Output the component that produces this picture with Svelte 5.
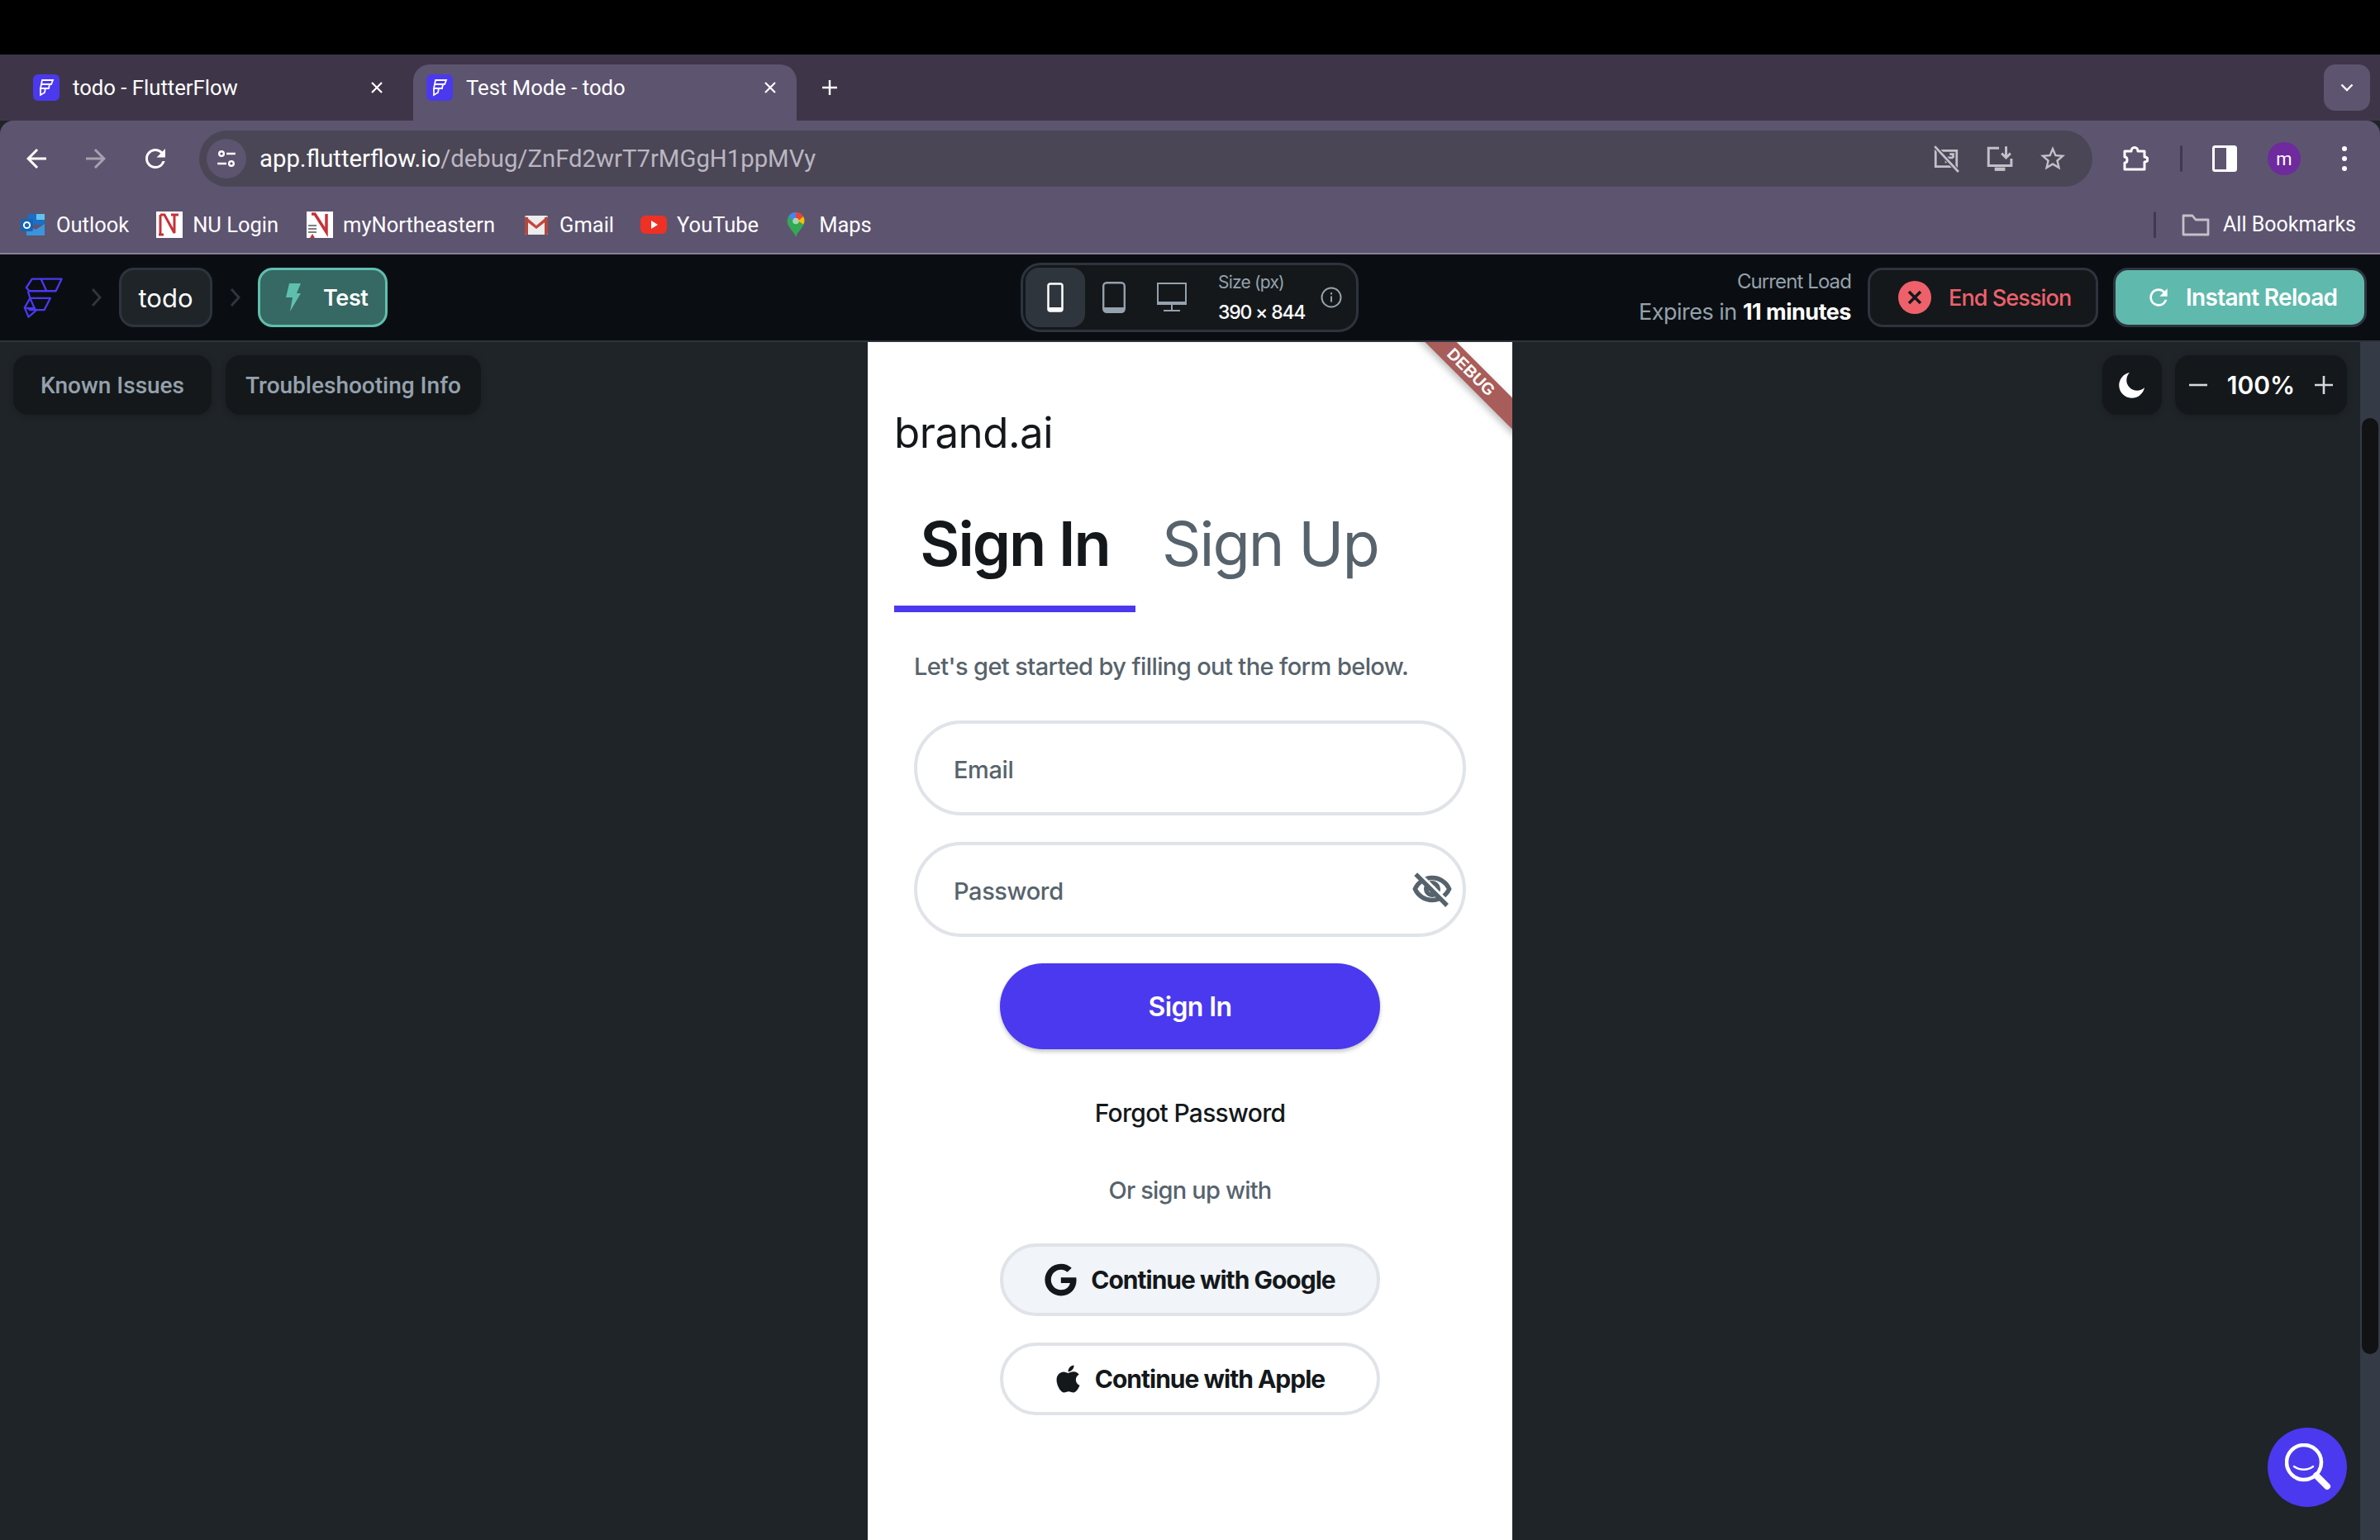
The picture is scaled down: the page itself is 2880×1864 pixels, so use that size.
<script>
  const bookmarks = [
    { name: 'Outlook', icon: 'outlook', gap: 33 },
    { name: 'NU Login', icon: 'nu', gap: 34 },
    { name: 'myNortheastern', icon: 'nu2', gap: 34 },
    { name: 'Gmail', icon: 'gmail', gap: 32 },
    { name: 'YouTube', icon: 'yt', gap: 33 },
    { name: 'Maps', icon: 'maps', gap: 0 }
  ];
  const tabs = [
    { title: 'todo - FlutterFlow', active: false },
    { title: 'Test Mode - todo', active: true }
  ];
</script>

{#snippet fav()}
  <span class="favicon">
    <svg viewBox="0 0 32 32" width="32" height="32">
      <rect width="32" height="32" rx="6" fill="#4b39ef" />
      <path d="M11 7h13l-2 5H10zM10 12h10l-1 5H9zM9 17h6l-1 5-5 3z" fill="none" stroke="#fff" stroke-width="1.800" />
    </svg>
  </span>
{/snippet}

<div class="page">
  <div class="blackbar"></div>

  <div class="tabstrip">
    {#each tabs as tab}
      <div class="tab" class:active={tab.active}>
        {@render fav()}
        <span class="tab-title">{tab.title}</span>
        <svg class="tab-x" viewBox="0 0 16 16" width="16" height="16"><path d="M2 2l12 12M14 2L2 14" stroke="#fff" stroke-width="2.200" /></svg>
      </div>
    {/each}
    <svg class="newtab" viewBox="0 0 20 20" width="20" height="20"><path d="M10 1v18M1 10h18" stroke="#fff" stroke-width="2.400" /></svg>
    <div class="tab-menu">
      <svg viewBox="0 0 16 10" width="16" height="10"><path d="M1.500 1.500L8 8l6.500-6.500" fill="none" stroke="#fff" stroke-width="2.400" /></svg>
    </div>
  </div>

  <div class="chrome">
    <div class="toolbar">
      <div class="navs">
        <svg viewBox="0 0 24 24" width="36" height="36"><path fill="#fff" d="M20 11H7.830l5.590-5.590L12 4l-8 8 8 8 1.410-1.410L7.830 13H20v-2z" /></svg>
        <svg class="dim" viewBox="0 0 24 24" width="36" height="36"><path fill="#fff" d="M4 11h12.170l-5.590-5.590L12 4l8 8-8 8-1.410-1.410L16.170 13H4v-2z" /></svg>
        <svg viewBox="0 0 24 24" width="36" height="36"><path fill="#fff" d="M17.650 6.350A7.958 7.958 0 0 0 12 4c-4.420 0-7.990 3.580-7.990 8s3.570 8 7.990 8c3.730 0 6.840-2.550 7.730-6h-2.080A5.990 5.990 0 0 1 12 18c-3.310 0-6-2.690-6-6s2.690-6 6-6c1.660 0 3.140.690 4.220 1.780L13 11h7V4l-2.350 2.350z" /></svg>
      </div>
      <div class="omnibox">
        <span class="site">
          <svg viewBox="0 0 24 24" width="26" height="26" fill="none" stroke="#fff" stroke-width="2.200">
            <circle cx="6.500" cy="6.500" r="2.600" /><path d="M12 6.500h10M2 17.500h10" /><circle cx="17.500" cy="17.500" r="2.600" />
          </svg>
        </span>
        <span class="url"><b>app.flutterflow.io</b>/debug/ZnFd2wrT7rMGgH1ppMVy</span>
        <div class="omni-icons">
          <svg viewBox="0 0 32 32" width="34" height="34" fill="none" stroke="#c4c0c9" stroke-width="2.600">
            <path d="M4 7h24v18H4z" /><path d="M16 21v-6h8M20 11h4v4" /><path d="M3 2l27 29" stroke="#4a4655" stroke-width="5" /><path d="M3 2l27 29" />
          </svg>
          <svg viewBox="0 0 32 32" width="34" height="34" fill="none" stroke="#c4c0c9" stroke-width="2.800">
            <path d="M16 4H4v20h26v-8" /><path d="M24 2v12M19 10l5 5 5-5" /><path d="M11 28h12" stroke-width="4" />
          </svg>
          <svg viewBox="0 0 24 24" width="36" height="36"><path fill="#c4c0c9" d="M22 9.240l-7.190-.620L12 2 9.190 8.630 2 9.240l5.460 4.730L5.820 21 12 17.270 18.180 21l-1.630-7.030L22 9.240zM12 15.400l-3.760 2.270 1-4.280-3.320-2.880 4.380-.380L12 6.100l1.710 4.040 4.380.380-3.320 2.880 1 4.280L12 15.400z" /></svg>
        </div>
      </div>
      <div class="actions">
        <svg viewBox="0 0 32 32" width="32" height="36" fill="none" stroke="#fff" stroke-width="3">
          <path d="M3 7h8c0-6 8-6 8 0h8v7c5 0 5 6 0 6v9H3v-8c4 0 4-7 0-7z" stroke-linejoin="round" />
        </svg>
        <span class="vsep"></span>
        <svg viewBox="0 0 30 32" width="30" height="32"><rect x="1.500" y="1.500" width="27" height="29" rx="2" fill="none" stroke="#fff" stroke-width="3" /><rect x="17" y="1.500" width="12" height="29" fill="#fff" /></svg>
        <span class="avatar">m</span>
        <span class="dots"><i></i><i></i><i></i></span>
      </div>
    </div>

    <div class="bookmarks">
      {#each bookmarks as b}
        <div class="bm" style="margin-right: {b.gap}px">
          {#if b.icon === 'outlook'}
            <svg viewBox="0 0 32 32" width="32" height="32">
              <rect x="10" y="3" width="20" height="13" fill="#1d6fc4" /><rect x="20" y="3" width="10" height="7" fill="#63c3f0" />
              <path d="M8 15l11 7 11-7v14H8z" fill="#3a95dc" /><rect x="1" y="9" width="15" height="15" rx="2" fill="#1565b8" />
              <circle cx="8.500" cy="16.500" r="3.600" fill="none" stroke="#fff" stroke-width="2" />
            </svg>
          {:else if b.icon === 'nu'}
            <svg viewBox="0 0 32 32" width="32" height="32">
              <rect width="32" height="32" fill="#fff" /><path d="M5 4h5l12 22V4M5 4v24M27 4h-9M3 28h6" fill="none" stroke="#c8313a" stroke-width="3" />
            </svg>
          {:else if b.icon === 'nu2'}
            <svg viewBox="0 0 32 32" width="32" height="32">
              <rect width="32" height="32" fill="#fff" /><path d="M6 3h4l14 22V3" fill="none" stroke="#c8313a" stroke-width="3.500" /><path d="M2 17h10M2 21h10M2 25h10" stroke="#555" stroke-width="1.500" /><path d="M4 32l3-5 3 5z" fill="#c8313a" />
            </svg>
          {:else if b.icon === 'gmail'}
            <svg viewBox="0 0 32 32" width="32" height="32">
              <rect x="2" y="5" width="28" height="23" rx="2" fill="#ececec" /><path d="M3 6l13 11L29 6v5L16 21 3 11z" fill="#c4463c" /><path d="M2 7h4v21H4a2 2 0 0 1-2-2zM30 7h-4v21h2a2 2 0 0 0 2-2z" fill="#b0493f" />
            </svg>
          {:else if b.icon === 'yt'}
            <svg viewBox="0 0 32 32" width="32" height="32">
              <rect y="5" width="32" height="22" rx="6" fill="#ee3124" /><path d="M13 11l8 5-8 5z" fill="#fff" />
            </svg>
          {:else}
            <svg class="maps" viewBox="0 0 24 32" width="24" height="32">
              <path d="M12 1a10.500 10.500 0 0 1 10.500 10.500C22.500 19 14 24 12 31 10 24 1.500 19 1.500 11.500A10.500 10.500 0 0 1 12 1z" fill="#34a853" />
              <path d="M4 4.500A10.500 10.500 0 0 1 12 1v7a4 4 0 0 0-4 3.500z" fill="#4285f4" /><path d="M12 1a10.500 10.500 0 0 1 9 5l-6 5a4 4 0 0 0-3-3z" fill="#ea4335" />
              <path d="M21 6c2 3 1.800 7 0 9.500l-6-4z" fill="#fbbc04" /><circle cx="12" cy="11.500" r="3.800" fill="#fff" opacity=".55" />
            </svg>
          {/if}
          <span>{b.name}</span>
        </div>
      {/each}
      <span class="vsep bm-sep"></span>
      <svg viewBox="0 0 34 28" width="34" height="28" fill="none" stroke="#c4c0c9" stroke-width="2.800"><path d="M2 25V3h11l4 5h15v18H2z" stroke-linejoin="round" /></svg>
      <span class="allbm">All Bookmarks</span>
    </div>
  </div>

  <header class="appbar">
    <div class="crumbs">
      <svg class="ff-logo" viewBox="50 258 150 148" width="50" height="49" fill="none" stroke="#4b39ef" stroke-width="7" stroke-linejoin="round">
        <path d="M85 263h108l-21 44H76l-12-12z" /><path d="M118 263l20 44" />
        <path d="M70 307l8 26h74l-22 43H76l-8-9" /><path d="M78 333l-20 35 14 34 26-22-20-47" /><path d="M58 370h40" />
      </svg>
      <svg class="chev first" viewBox="0 0 13 24" width="13" height="24"><path d="M2 2l9 10-9 10" fill="none" stroke="#30363e" stroke-width="3" /></svg>
      <div class="pill">todo</div>
      <svg class="chev" viewBox="0 0 13 24" width="13" height="24"><path d="M2 2l9 10-9 10" fill="none" stroke="#30363e" stroke-width="3" /></svg>
      <div class="pill test">
        <svg viewBox="0 0 18 34" width="18" height="34"><path d="M4 0h14l-5 12h5L5 34l3-17H0z" fill="#5fbfae" /></svg>
        <span>Test</span>
      </div>
    </div>

    <div class="devices">
      <div class="device on">
        <svg viewBox="0 0 20 36" width="20" height="36"><rect x="1.500" y="1.500" width="17" height="33" rx="2.500" fill="none" stroke="#fff" stroke-width="2.500" /><rect x="1.500" y="30" width="17" height="5" rx="2" fill="#fff" /></svg>
      </div>
      <div class="device">
        <svg viewBox="0 0 28 38" width="28" height="38"><rect x="1.200" y="1.200" width="25.600" height="35.600" rx="4" fill="none" stroke="#95a1ac" stroke-width="2.400" /><path d="M1 31h26v3a3 3 0 0 1-3 3H4a3 3 0 0 1-3-3z" fill="#95a1ac" /></svg>
      </div>
      <div class="device">
        <svg viewBox="0 0 36 36" width="36" height="36" fill="none"><rect x="1" y="1" width="34" height="25" stroke="#95a1ac" stroke-width="2" /><rect x="0" y="23" width="36" height="4" fill="#95a1ac" /><path d="M18 27v6M8 34h20" stroke="#95a1ac" stroke-width="2" /></svg>
      </div>
      <div class="size">
        <span class="size-l">Size (px)</span>
        <span class="size-v">390 × 844</span>
      </div>
      <svg class="info" viewBox="0 0 26 26" width="26" height="26" fill="none" stroke="#95a1ac" stroke-width="2"><circle cx="13" cy="13" r="11.500" /><path d="M13 11.500v7M13 7v2.400" /></svg>
    </div>

    <div class="session">
      <div class="load">
        <span class="load-l">Current Load</span>
        <span class="load-v">Expires in <b>11 minutes</b></span>
      </div>
      <div class="btn end">
        <svg viewBox="0 0 40 40" width="40" height="40"><circle cx="20" cy="20" r="20" fill="#ee616b" /><path d="M13 13l14 14M27 13L13 27" stroke="#14181b" stroke-width="3.500" /></svg>
        <span>End Session</span>
      </div>
      <div class="btn reload">
        <svg viewBox="0 0 24 24" width="32" height="32"><path fill="#fff" d="M17.650 6.350A7.958 7.958 0 0 0 12 4c-4.420 0-7.990 3.580-7.990 8s3.570 8 7.990 8c3.730 0 6.840-2.550 7.730-6h-2.080A5.990 5.990 0 0 1 12 18c-3.310 0-6-2.690-6-6s2.690-6 6-6c1.660 0 3.140.690 4.220 1.780L13 11h7V4l-2.350 2.350z" /></svg>
        <span>Instant Reload</span>
      </div>
    </div>
  </header>

  <main class="stage">
    <div class="side-left">
      <div class="chip known">Known Issues</div>
      <div class="chip">Troubleshooting Info</div>
    </div>

    <section class="phone">
      <div class="ribbon"><span>DEBUG</span></div>
      <div class="brand">brand.ai</div>
      <div class="tabs">
        <div class="t t-on">Sign In</div>
        <div class="t">Sign Up</div>
      </div>
      <p class="lead">Let's get started by filling out the form below.</p>
      <form class="form">
        <div class="field"><input placeholder="Email" /></div>
        <div class="field">
          <input placeholder="Password" />
          <svg viewBox="0 0 24 24" width="50" height="50"><path fill="#57636c" stroke="#57636c" stroke-width=".6" d="M12 6c3.790 0 7.170 2.130 8.820 5.500-.590 1.220-1.420 2.270-2.410 3.120l1.410 1.410c1.390-1.230 2.490-2.770 3.180-4.530C21.270 7.110 17 4 12 4c-1.270 0-2.490.2-3.640.57l1.650 1.650C10.660 6.090 11.320 6 12 6zm-1.070 1.140L13 9.210c.570.25 1.030.71 1.280 1.280l2.070 2.070c.08-.34.14-.7.14-1.070C16.500 9.010 14.480 7 12 7c-.37 0-.72.05-1.070.14zM2.010 3.870l2.680 2.680C3.060 7.830 1.770 9.530 1 11.500 2.730 15.890 7 19 12 19c1.520 0 2.980-.29 4.320-.82l3.420 3.420 1.410-1.410L3.420 2.450 2.010 3.870zm7.500 7.500l2.610 2.610c-.04.01-.08.02-.12.02-1.380 0-2.500-1.120-2.500-2.500 0-.05.01-.08.01-.13zm-3.400-3.400l1.750 1.750c-.23.55-.36 1.150-.36 1.780 0 2.480 2.020 4.500 4.500 4.500.63 0 1.230-.13 1.770-.36l.98.98c-.88.24-1.800.38-2.750.38-3.790 0-7.170-2.130-8.820-5.500.7-1.430 1.720-2.610 2.930-3.530z" /></svg>
        </div>
        <button type="button" class="primary">Sign In</button>
        <div class="forgot">Forgot Password</div>
        <div class="orwith">Or sign up with</div>
        <button type="button" class="social google">
          <svg viewBox="0 0 488 512" width="39" height="40"><path fill="#14181b" d="M488 261.800C488 403.300 391.100 504 248 504 110.800 504 0 393.200 0 256S110.800 8 248 8c66.800 0 123 24.500 166.300 64.900l-67.500 64.900C258.500 52.600 94.300 116.600 94.300 256c0 86.500 69.100 156.600 153.700 156.600 98.200 0 135-70.400 140.800-106.900H248v-85.300h236.100c2.300 12.700 3.900 24.900 3.900 41.400z" /></svg>
          <span>Continue with Google</span>
        </button>
        <button type="button" class="social">
          <svg viewBox="0 0 384 512" width="31" height="38"><path fill="#14181b" d="M318.700 268.700c-.2-36.700 16.400-64.400 50-84.800-18.800-26.900-47.200-41.700-84.700-44.600-35.500-2.800-74.300 20.700-88.500 20.700-15 0-49.400-19.700-76.400-19.700C63.300 141.200 4 184.800 4 273.500q0 39.300 14.400 81.200c12.800 36.700 59 126.700 107.200 125.200 25.200-.6 43-17.900 75.800-17.900 31.800 0 48.300 17.900 76.400 17.900 48.600-.7 90.400-82.500 102.600-119.300-65.200-30.700-61.700-90-61.700-91.900zm-56.600-164.200c27.300-32.400 24.800-61.900 24-72.500-24.100 1.400-52 16.400-67.900 34.900-17.500 19.800-27.800 44.300-25.600 71.900 26.100 2 49.900-11.400 69.500-34.300z" /></svg>
          <span>Continue with Apple</span>
        </button>
      </form>
    </section>

    <div class="side-right">
      <div class="tools">
        <div class="chip moon">
          <svg viewBox="0 0 32 32" width="32" height="32"><path fill="#fff" d="M13 1A15.500 15.500 0 1 0 31 19 12.500 12.500 0 0 1 13 1z" /></svg>
        </div>
        <div class="chip zoom">
          <svg viewBox="0 0 22 22" width="22" height="22"><path d="M0 11h22" stroke="#d5d8dc" stroke-width="2.600" /></svg>
          <span>100%</span>
          <svg viewBox="0 0 22 22" width="22" height="22"><path d="M0 11h22M11 0v22" stroke="#d5d8dc" stroke-width="2.600" /></svg>
        </div>
      </div>
      <div class="fab">
        <svg viewBox="0 0 56 58" width="56" height="58" fill="none" stroke="#fff">
          <circle cx="23" cy="23" r="21" stroke-width="4.500" />
          <path d="M11 28c7 5 17 5 23 0" stroke-width="2.400" stroke-linecap="round" />
          <path d="M38 39l13 13" stroke-width="8" stroke-linecap="round" />
        </svg>
      </div>
    </div>

    <div class="scroll"><div class="thumb"></div></div>
  </main>
</div>

<style>
  :global(body) { margin: 0; background: #1f2428; }
  .page { width: 2880px; height: 1864px; display: flex; flex-direction: column; overflow: hidden; font-family: Roboto, "Liberation Sans", sans-serif; }
  svg { display: block; flex: none; }

  .blackbar { height: 66px; background: #000; flex: none; }

  .tabstrip { height: 80px; flex: none; background: #3e3648; display: flex; align-items: flex-end; color: #fff; position: relative; }
  .tab { width: 500px; height: 68px; box-sizing: border-box; padding: 0 36px 12px 40px; display: flex; align-items: center; }
  .tab.active { width: 464px; padding: 0 24px 12px 16px; background: #5d5470; border-radius: 20px 20px 0 0; }
  .tab-title { font-size: 25.700px; margin-left: 16px; flex: 1; white-space: nowrap; }
  .newtab { margin: 0 0 30px 30px; }
  .tab-menu { position: absolute; right: 12px; top: 12px; width: 56px; height: 56px; border-radius: 14px; background: #5d5470; display: flex; align-items: center; justify-content: center; }

  .chrome { height: 160px; flex: none; background: #5d5470; border-radius: 16px 16px 0 0; border-bottom: 2px solid #8a7f9a; box-sizing: content-box; color: #fff; }
  .toolbar { height: 92px; display: flex; align-items: center; padding: 0 0 0 26px; box-sizing: border-box; }
  .navs { display: flex; gap: 36px; width: 215px; flex: none; }
  .dim { opacity: .45; }
  .omnibox { width: 2291px; height: 68px; flex: none; background: #4a4655; border-radius: 34px; display: flex; align-items: center; padding: 0 30px 0 9px; box-sizing: border-box; }
  .site { width: 48px; height: 48px; border-radius: 50%; background: #5d5470; display: flex; align-items: center; justify-content: center; flex: none; }
  .url { font-size: 29.300px; margin-left: 16px; color: #bbb6c2; flex: 1; white-space: nowrap; }
  .url b { font-weight: 400; color: #fff; }
  .omni-icons { display: flex; gap: 30px; align-items: center; }
  .actions { display: flex; align-items: center; margin-left: 36px; }
  .vsep { width: 3px; height: 32px; background: #413a4e; border-radius: 2px; flex: none; }
  .actions .vsep { margin: 0 36px 0 38px; }
  .avatar { width: 40px; height: 40px; border-radius: 50%; background: #6f2a9e; font-size: 22px; display: flex; align-items: center; justify-content: center; margin: 0 0 0 37px; }
  .dots { display: flex; flex-direction: column; gap: 6px; margin-left: 50px; }
  .dots i { width: 6px; height: 6px; border-radius: 50%; background: #fff; display: block; }

  .bookmarks { height: 68px; display: flex; align-items: center; padding: 0 29px 1px 24px; box-sizing: border-box; font-size: 25.500px; }
  .bm { display: flex; align-items: center; gap: 12px; white-space: nowrap; }
  .maps { margin-right: 4px; }
  .bm-sep { margin-left: auto; margin-right: 31px; }
  .allbm { margin-left: 16px; white-space: nowrap; font-size: 25px; }

  .appbar { height: 104px; flex: none; box-sizing: content-box; background: #0a0e12; border-bottom: 2px solid #2e343e; display: grid; grid-template-columns: 1235px 409px 1fr; align-items: center; font-family: Inter, sans-serif; color: #fff; }
  .crumbs { display: flex; align-items: center; padding-left: 27px; }
  .chev { margin: 0 21px 0 21px; }
  .chev.first { margin: 0 21px 0 33px; }
  .pill { height: 72px; width: 113px; justify-content: center; box-sizing: border-box; border: 3px solid #2e343e; background: #1f2428; border-radius: 18px; font-size: 31px; display: flex; align-items: center; }
  .test { width: 157px; justify-content: flex-start; background: #366864; border-color: #5fbfae; padding-left: 31px; gap: 27px; font-size: 27px; font-weight: 600; letter-spacing: -.4px; }

  .devices { height: 84px; box-sizing: border-box; border: 3px solid #2e343e; background: #14181b; border-radius: 24px; display: flex; align-items: center; padding: 0 0 0 3px; }
  .device { width: 72px; height: 72px; border-radius: 16px; display: flex; align-items: center; justify-content: center; flex: none; margin-right: 0; }
  .device.on { background: #2e353d; margin-right: -1px; }
  .device:nth-child(2) { margin-right: -2px; }
  .size { display: flex; flex-direction: column; gap: 10px; margin-left: 20px; white-space: nowrap; width: 112px; }
  .size-l { font-size: 21px; color: #95a1ac; line-height: 26px; letter-spacing: -.8px; }
  .size-v { font-size: 23px; font-weight: 500; line-height: 26px; letter-spacing: -1.200px; }
  .info { margin-left: 12px; }

  .session { display: flex; align-items: center; justify-content: flex-end; padding-right: 16px; }
  .load { display: flex; flex-direction: column; align-items: flex-end; gap: 6px; margin-right: 20px; white-space: nowrap; }
  .load-l { font-size: 24px; color: #95a1ac; line-height: 30px; letter-spacing: -.9px; }
  .load-v { font-size: 27px; color: #95a1ac; line-height: 32px; letter-spacing: -.5px; }
  .load-v b { color: #fff; font-weight: 700; }
  .btn { height: 72px; box-sizing: border-box; border-radius: 18px; border: 3px solid #2e343e; display: flex; align-items: center; white-space: nowrap; font-size: 28px; font-weight: 500; }
  .end { width: 279px; background: #14181b; color: #ee616b; padding-left: 34px; gap: 21px; margin-right: 18px; font-size: 27px; letter-spacing: -.9px; }
  .reload { width: 307px; background: #5fbaad; padding-left: 36px; gap: 17px; font-weight: 600; letter-spacing: -.7px; }

  .stage { flex: 1; min-height: 0; display: grid; grid-template-columns: 1050px 780px 1026px 24px; background: #1f2428; }
  .side-left { display: flex; gap: 17px; padding: 16px 0 0 16px; align-items: flex-start; }
  .chip { height: 72px; display: flex; align-items: center; border-radius: 18px; background: #14181b; box-shadow: 0 2px 8px rgba(0,0,0,.18); white-space: nowrap; box-sizing: border-box; }
  .side-left .chip { padding: 0 24px; color: #95a1ac; font-size: 28px; font-weight: 500; font-family: Roboto, sans-serif; }
  .side-left .chip.known { padding: 0 33px; }

  .phone { background: #fff; position: relative; overflow: hidden; font-family: Inter, sans-serif; color: #14181b; display: flex; flex-direction: column; }
  .ribbon { position: absolute; left: 600px; top: 23px; width: 260px; height: 27px; background: #a95d5a; transform: rotate(45deg); display: flex; align-items: center; justify-content: center; box-shadow: 0 4px 8px rgba(0,0,0,.25); }
  .ribbon span { color: #fff; font: 700 20px "Liberation Sans", sans-serif; }
  .brand { margin: 82px 0 0 32px; font-size: 51px; line-height: 56px; letter-spacing: -.5px; }
  .tabs { display: flex; margin: 38px 0 0 32px; }
  .t { height: 151px; box-sizing: border-box; padding: 22px 32px 0; font-size: 74px; line-height: 92px; letter-spacing: -2px; color: #57636c; font-weight: 400; white-space: nowrap; }
  .t-on { width: 292px; padding: 22px 0 0; text-align: center; color: #14181b; font-weight: 600; border-bottom: 8px solid #4b39ef; }
  .lead { margin: 48px 0 0 56px; font-size: 29px; line-height: 36px; color: #57636c; font-weight: 500; letter-spacing: -.6px; }
  .form { margin: 47px 56px 0; display: flex; flex-direction: column; align-items: center; }
  .field { width: 100%; height: 115px; box-sizing: border-box; border: 4px solid #e0e3e7; border-radius: 58px; display: flex; align-items: center; padding: 0 12px 0 44px; margin-bottom: 32px; }
  .field input { flex: 1; min-width: 0; border: 0; outline: 0; background: none; padding: 3px 0 0; font: 500 29px Inter, sans-serif; letter-spacing: -.4px; }
  .field input::placeholder { color: #57636c; opacity: 1; }
  .primary { width: 460px; height: 104px; border: 0; border-radius: 52px; background: #4b39ef; color: #fff; font: 600 32px Inter, sans-serif; letter-spacing: -.6px; box-shadow: 0 3px 5px rgba(0,0,0,.22); flex: none; }
  .forgot { margin-top: 59px; font-size: 30px; line-height: 36px; font-weight: 500; letter-spacing: -.7px; }
  .orwith { margin-top: 58px; font-size: 29px; line-height: 36px; color: #57636c; font-weight: 500; letter-spacing: -.8px; }
  .social { width: 460px; height: 88px; flex: none; box-sizing: border-box; border: 4px solid #e0e3e7; border-radius: 44px; background: #fff; display: flex; align-items: center; justify-content: center; gap: 17px; color: #14181b; font: 700 30px Inter, sans-serif; letter-spacing: -1px; margin-top: 32px; padding: 0; }
  .orwith + .social { margin-top: 46px; }
  .google { background: #f1f4f8; }

  .side-right { position: relative; }
  .tools { display: flex; justify-content: flex-end; gap: 16px; padding: 16px 16px 0 0; }
  .moon { width: 72px; justify-content: center; }
  .zoom { width: 208px; padding: 0 17px; justify-content: space-between; color: #fff; font: 600 30px Inter, sans-serif; }
  .fab { position: absolute; right: 16px; bottom: 40px; width: 96px; height: 96px; border-radius: 50%; background: #4b39ef; display: flex; align-items: center; justify-content: center; padding-left: 2px; box-sizing: border-box; }
  .scroll { background: #343a46; padding: 92px 2px 0; }
  .thumb { height: 1133px; border-radius: 10px; background: #111213; }
</style>
